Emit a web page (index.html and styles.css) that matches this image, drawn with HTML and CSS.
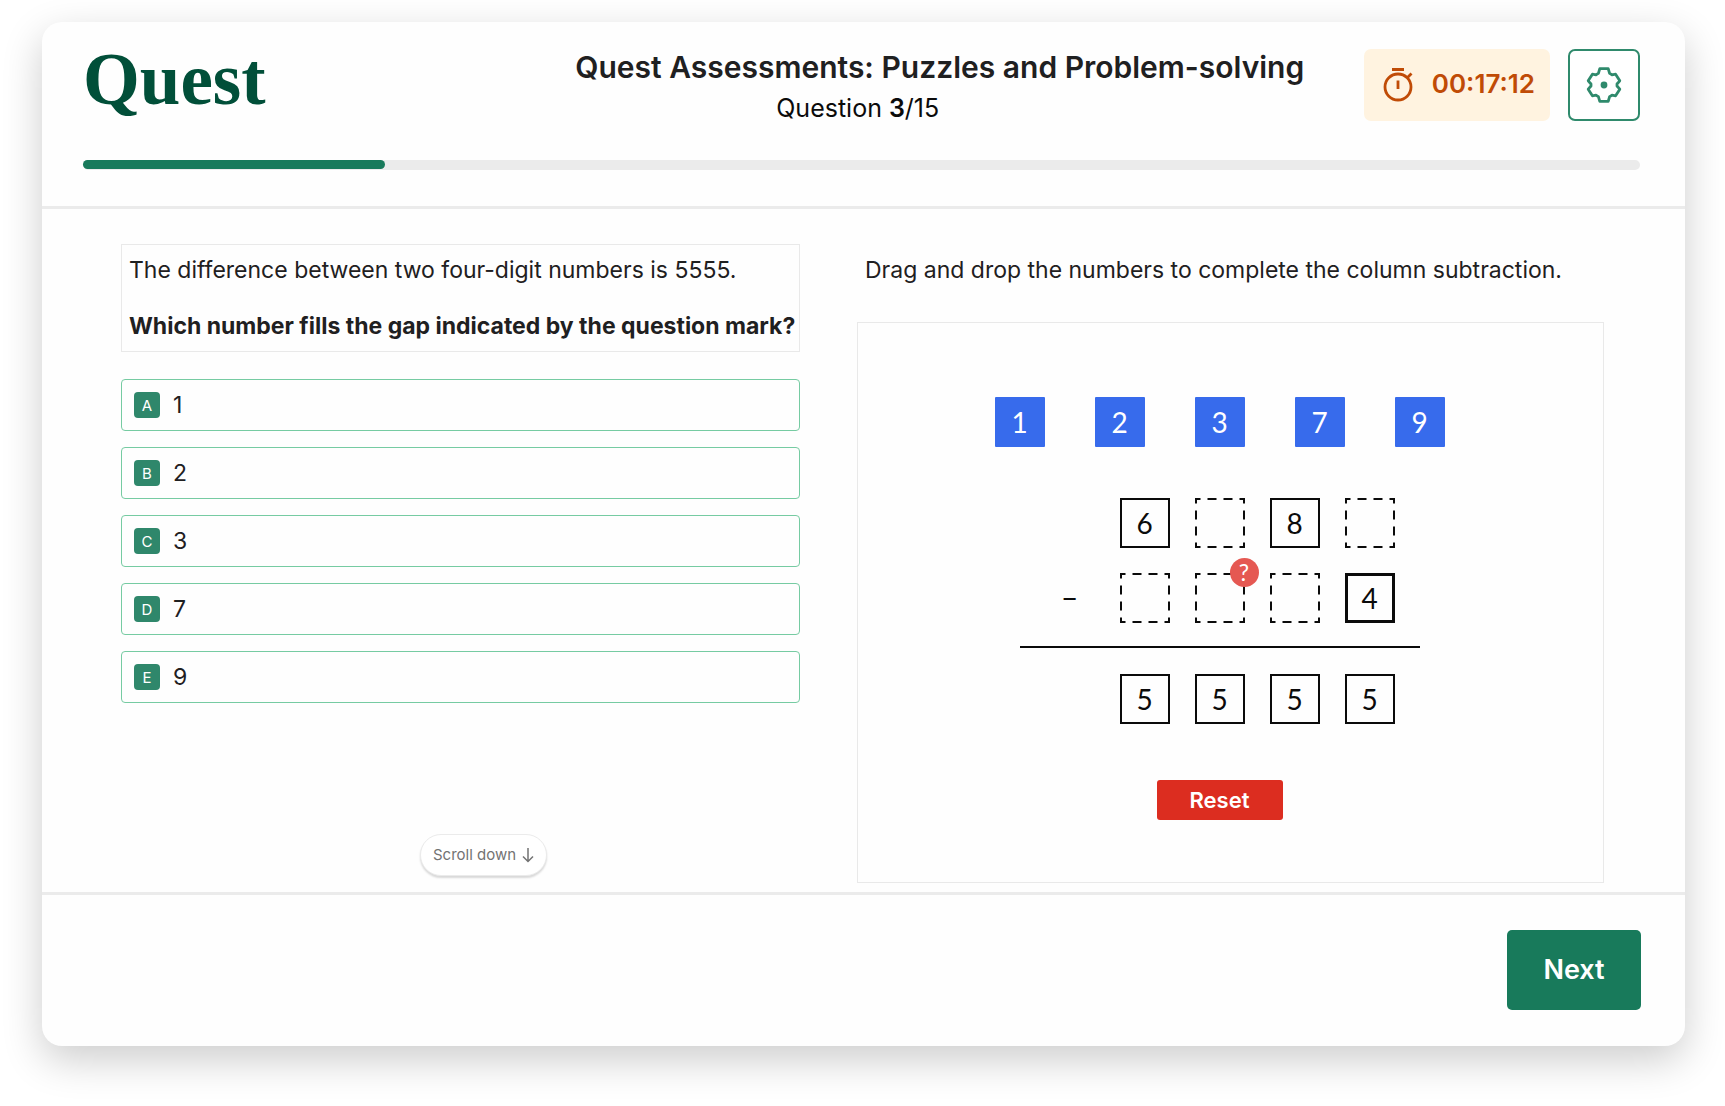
FILE: index.html
```html
<!DOCTYPE html>
<html lang="en">
<head>
<meta charset="utf-8">
<meta name="viewport" content="width=device-width, initial-scale=1">
<title>Quest Assessments</title>
<link rel="stylesheet" href="styles.css">
</head>
<body>
<svg class="defs" aria-hidden="true">
  <symbol id="slot" viewBox="0 0 50 50">
    <rect x="1" y="1" width="48" height="48" fill="none" stroke="currentColor" stroke-width="2" stroke-dasharray="9 7" stroke-dashoffset="4.5"/>
  </symbol>
</svg>
<div class="card">
  <header class="header">
    <div class="topbar">
      <a class="logo" href="#">Quest</a>
      <div class="heading">
        <h1 class="title">Quest Assessments: Puzzles and Problem-solving</h1>
        <p class="count">Question <strong>3</strong>/15</p>
      </div>
      <div class="tools">
        <div class="timer">
          <svg class="timer-icon" viewBox="0 0 30 36" fill="none" stroke="currentColor" stroke-width="2.8" aria-hidden="true">
            <circle cx="15" cy="21" r="13"/>
            <path d="M9 3.500h12M15 14.500v8.500M24.500 11.500l4-4"/>
          </svg>
          <time>00:17:12</time>
        </div>
        <button class="settings" type="button" aria-label="Settings">
          <svg class="gear" viewBox="0 0 36 36" aria-hidden="true">
            <path fill="none" stroke="currentColor" stroke-width="2.800" stroke-linejoin="round" d="M13.800 1.600h8.400l1.400 4.800 2.400 1.400 3.600-.6L33.800 13.800 31 17v2l2.800 3.200L29.600 28.800l-3.600-.6-2.400 1.400-1.400 4.800h-8.400l-1.400-4.800-2.400-1.400-3.600.6L2.200 22.200 5 19v-2L2.200 13.800 6.400 7.200l3.600.6 2.400-1.400z"/>
            <circle cx="18" cy="18" r="3.400" fill="currentColor"/>
          </svg>
        </button>
      </div>
    </div>
    <div class="progress" role="progressbar" aria-label="Progress" aria-valuemin="0" aria-valuemax="15" aria-valuenow="3">
      <div class="progress-fill"></div>
    </div>
  </header>

  <main class="main">
    <section class="question">
      <div class="prompt">
        <p>The difference between two four-digit numbers is 5555.</p>
        <p class="ask">Which number fills the gap indicated by the question mark?</p>
      </div>
      <div class="options" role="radiogroup" aria-label="Answers">
        <label class="option"><input class="option-input" type="radio" name="answer"><span class="letter">A</span><span>1</span></label>
        <label class="option"><input class="option-input" type="radio" name="answer"><span class="letter">B</span><span>2</span></label>
        <label class="option"><input class="option-input" type="radio" name="answer"><span class="letter">C</span><span>3</span></label>
        <label class="option"><input class="option-input" type="radio" name="answer"><span class="letter">D</span><span>7</span></label>
        <label class="option"><input class="option-input" type="radio" name="answer"><span class="letter">E</span><span>9</span></label>
      </div>
      <button class="scroll" type="button">Scroll down
        <svg class="scroll-icon" viewBox="0 0 12 16" fill="none" stroke="currentColor" stroke-width="1.500" aria-hidden="true"><path d="M6 1v13.500M1 9.500l5 5 5-5"/></svg>
      </button>
    </section>

    <section class="workspace">
      <p class="instruction">Drag and drop the numbers to complete the column subtraction.</p>
      <div class="puzzle">
        <div class="tiles">
          <button class="tile" type="button" draggable="true">1</button>
          <button class="tile" type="button" draggable="true">2</button>
          <button class="tile" type="button" draggable="true">3</button>
          <button class="tile" type="button" draggable="true">7</button>
          <button class="tile" type="button" draggable="true">9</button>
        </div>
        <div class="sum">
          <div class="row">
            <span></span>
            <span class="cell">6</span>
            <span class="slot"><svg class="slot-box"><use href="#slot"/></svg></span>
            <span class="cell">8</span>
            <span class="slot"><svg class="slot-box"><use href="#slot"/></svg></span>
          </div>
          <div class="row">
            <span class="minus">−</span>
            <span class="slot"><svg class="slot-box"><use href="#slot"/></svg></span>
            <span class="slot"><svg class="slot-box"><use href="#slot"/></svg><span class="mark">?</span></span>
            <span class="slot"><svg class="slot-box"><use href="#slot"/></svg></span>
            <span class="cell cell-strong">4</span>
          </div>
          <hr class="rule">
          <div class="row">
            <span></span>
            <span class="cell">5</span>
            <span class="cell">5</span>
            <span class="cell">5</span>
            <span class="cell">5</span>
          </div>
        </div>
        <button class="reset" type="button">Reset</button>
      </div>
    </section>
  </main>

  <footer class="footer">
    <button class="next" type="button">Next</button>
  </footer>
</div>
</body>
</html>
```
FILE: styles.css
```css
* {
  box-sizing: border-box;
}

body {
  margin: 0;
  padding: 22px 40px 60px 42px;
  background: #fff;
  color: #1f2021;
  font-family: Inter, "Liberation Sans", sans-serif;
  font-size: 23px;
  line-height: 32px;
}

h1,
p {
  margin: 0;
}

button {
  border: 0;
  padding: 0;
  font: inherit;
  cursor: pointer;
}

.defs {
  display: none;
}

.card {
  background: #fefefe;
  border-radius: 20px;
  box-shadow: 0 14px 40px rgba(0, 0, 0, 0.2);
}

/* Header */
.header {
  padding: 27px 45px 36px 41px;
  border-bottom: 3px solid #ebebeb;
}

.topbar {
  display: flex;
  justify-content: space-between;
  align-items: flex-start;
}

.logo {
  color: #014f39;
  font-family: "Liberation Serif", serif;
  font-size: 73px;
  font-weight: 700;
  line-height: 62px;
  text-decoration: none;
}

.heading {
  margin-left: 250px;
}

.title {
  font-size: 30px;
  font-weight: 600;
  line-height: 36px;
}

.count {
  padding-right: 164px;
  color: #0b0b0b;
  font-size: 25px;
  line-height: 46px;
  text-align: center;
}

.count strong {
  font-weight: 600;
}

.tools {
  display: flex;
  gap: 18px;
}

.timer {
  display: flex;
  align-items: center;
  justify-content: space-between;
  width: 186px;
  height: 72px;
  padding: 0 15px 2px 19px;
  border-radius: 7px;
  background: #fff3e0;
  color: #c04b06;
  font-size: 26px;
  font-weight: 600;
}

.timer-icon {
  width: 30px;
  height: 36px;
}

.settings {
  display: grid;
  place-items: center;
  width: 72px;
  height: 72px;
  border: 2px solid #2f8a6c;
  border-radius: 7px;
  background: #fff;
  color: #2f8a6c;
}

.gear {
  width: 36px;
  height: 36px;
}

.progress {
  height: 10px;
  margin-top: 29px;
  border-radius: 5px;
  background: #ebebeb;
}

.progress-fill {
  width: 19.4%;
  height: 9px;
  border-radius: 5px;
  background: #187a5b;
}

/* Question and workspace */
.main {
  display: grid;
  grid-template-columns: 679fr 747fr;
  column-gap: 57px;
  padding: 35px 81px 9px 79px;
}

.question {
  display: flex;
  flex-direction: column;
}

.prompt {
  display: flex;
  flex-direction: column;
  gap: 24px;
  padding: 9px 0 9px 7px;
  border: 1px solid #e9e9e9;
}

.ask {
  font-weight: 700;
}

.options {
  display: flex;
  flex-direction: column;
  gap: 16px;
  margin-top: 27px;
}

.option {
  display: flex;
  align-items: center;
  gap: 13px;
  height: 52px;
  padding-left: 12px;
  border: 1px solid #76cba2;
  border-radius: 4px;
  cursor: pointer;
}

.option-input {
  position: absolute;
  opacity: 0;
}

.letter {
  width: 26px;
  height: 26px;
  border-radius: 4px;
  background: #2f876b;
  color: #fff;
  font-size: 15px;
  line-height: 27px;
  text-align: center;
}

.scroll {
  display: flex;
  align-items: center;
  justify-content: center;
  gap: 6px;
  width: 127px;
  height: 42px;
  margin: auto 0 7px 299px;
  border: 1px solid #ebebeb;
  border-radius: 21px;
  background: #fff;
  box-shadow: 0 2px 2px rgba(0, 0, 0, 0.15);
  color: #737373;
  font-size: 15px;
}

.scroll-icon {
  width: 12px;
  height: 16px;
}

.instruction {
  padding: 10px 8px 36px;
}

.puzzle {
  display: flex;
  flex-direction: column;
  align-items: center;
  padding: 74px 22px 62px 0;
  border: 1px solid #e9e9e9;
  font-family: Lato, sans-serif;
  font-size: 28px;
  color: #0b0b0b;
}

.tiles {
  display: flex;
  gap: 50px;
}

.tile {
  width: 50px;
  height: 50px;
  border-radius: 1px;
  background: #376bec;
  color: #fff;
}

.sum {
  width: 400px;
  margin: 51px 0 56px;
}

.row {
  display: grid;
  grid-template-columns: repeat(5, 50px);
  justify-content: center;
  gap: 25px;
}

.row + .row {
  margin-top: 25px;
}

.cell,
.slot {
  display: grid;
  place-items: center;
  height: 50px;
}

.cell {
  border: 2px solid currentColor;
}

.cell-strong {
  border-width: 3px;
}

.slot {
  position: relative;
}

.slot-box {
  width: 50px;
  height: 50px;
}

.minus {
  display: grid;
  place-items: center;
}

.mark {
  position: absolute;
  top: -15px;
  right: -14px;
  width: 29px;
  height: 29px;
  border-radius: 50%;
  background: #e55852;
  color: #fff;
  font-size: 23px;
  line-height: 29px;
  text-align: center;
}

.rule {
  height: 2px;
  margin: 23px 0 26px;
  border: 0;
  background: #0b0b0b;
}

.reset {
  width: 126px;
  height: 40px;
  border-radius: 3px;
  background: #dc2d20;
  color: #fff;
  font-family: Inter, sans-serif;
  font-size: 22px;
  font-weight: 600;
}

/* Footer */
.footer {
  display: flex;
  justify-content: flex-end;
  padding: 35px 44px 36px;
  border-top: 3px solid #ebebeb;
}

.next {
  width: 134px;
  height: 80px;
  border-radius: 5px;
  background: #187a5b;
  color: #fff;
  font-size: 27px;
  font-weight: 600;
}
```
